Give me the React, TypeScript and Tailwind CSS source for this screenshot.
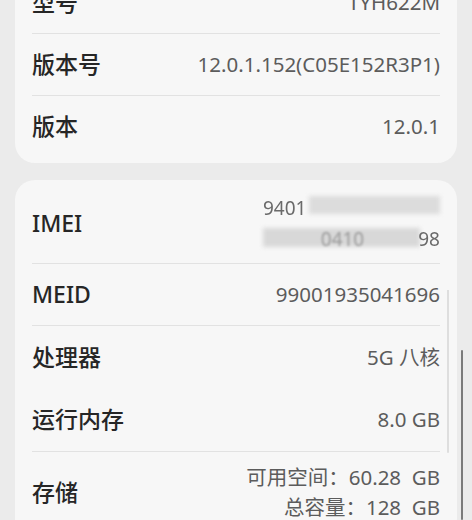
import React from "react";

const label = "text-[23px] font-medium text-[#262626] leading-none";
const value = "text-[20.5px] text-[#5c5c5c] leading-none text-right";

function Row({ name, h = "h-[61px]", children }: { name: string; h?: string; children: React.ReactNode }) {
  return (
    <div className={`flex items-center justify-between ${h}`}>
      <span className={label}>{name}</span>
      <div className={value}>{children}</div>
    </div>
  );
}

const Divider = () => <div className="h-px bg-[#e2e2e2]" />;

export default function App() {
  return (
    <div
      className="relative h-[520px] w-[472px] overflow-hidden bg-[#ebebeb] px-[15px]"
      style={{ fontFamily: '"Noto Sans", "Noto Sans CJK SC", sans-serif' }}
    >
      {/* device card */}
      <div className="-mt-[34px] rounded-[20px] bg-[#f7f7f7] px-[17px] py-[6px]">
        <Row name="型号">TYH622M</Row>
        <Divider />
        <Row name="版本号">12.0.1.152(C05E152R3P1)</Row>
        <Divider />
        <Row name="版本">12.0.1</Row>
      </div>

      {/* hardware card */}
      <div className="mt-[17px] rounded-[20px] bg-[#f7f7f7] px-[17px] pt-[4px] pb-[6px]">
        <div className="flex h-[79px] items-center justify-between">
          <span className={label}>IMEI</span>
          <div className="flex flex-col items-end gap-[12px] text-[19px] leading-none text-[#6a6a6a]">
            <div className="relative w-[177px]">
              <span className="blur-[0.7px]">9401</span>
              <div className="absolute left-[46px] right-0 -top-[3px] h-[18px] bg-[#dcdcdc] blur-[2px]" />
            </div>
            <div className="relative w-[177px] text-right">
              <div className="absolute left-0 right-[20px] -top-[2px] h-[19px] bg-[#d8d8d8] blur-[2px]" />
              <span className="relative mr-[54px] text-[#9a9a9a] blur-[1px]">0410</span>
              <span className="relative blur-[0.7px]">98</span>
            </div>
          </div>
        </div>
        <Divider />
        <Row name="MEID">99001935041696</Row>
        <Divider />
        <Row name="处理器" h="h-[62px]">5G 八核</Row>
        <Row name="运行内存" h="h-[63px]">8.0 GB</Row>
        <Divider />
        <div className="flex h-[80px] items-center justify-between">
          <span className={label}>存储</span>
          <div className={`${value} flex flex-col items-end gap-[9px]`}>
            <span>可用空间：60.28&nbsp;&nbsp;GB</span>
            <span>总容量：128&nbsp;&nbsp;GB</span>
          </div>
        </div>
      </div>

      {/* scroll indicators */}
      <div className="absolute left-[447px] top-[290px] h-[163px] w-[2px] rounded-b-full bg-[#dedede]" />
      <div className="absolute left-[461px] top-[350px] h-[170px] w-[2px] rounded-full bg-[#7a7a7a]" />
    </div>
  );
}
